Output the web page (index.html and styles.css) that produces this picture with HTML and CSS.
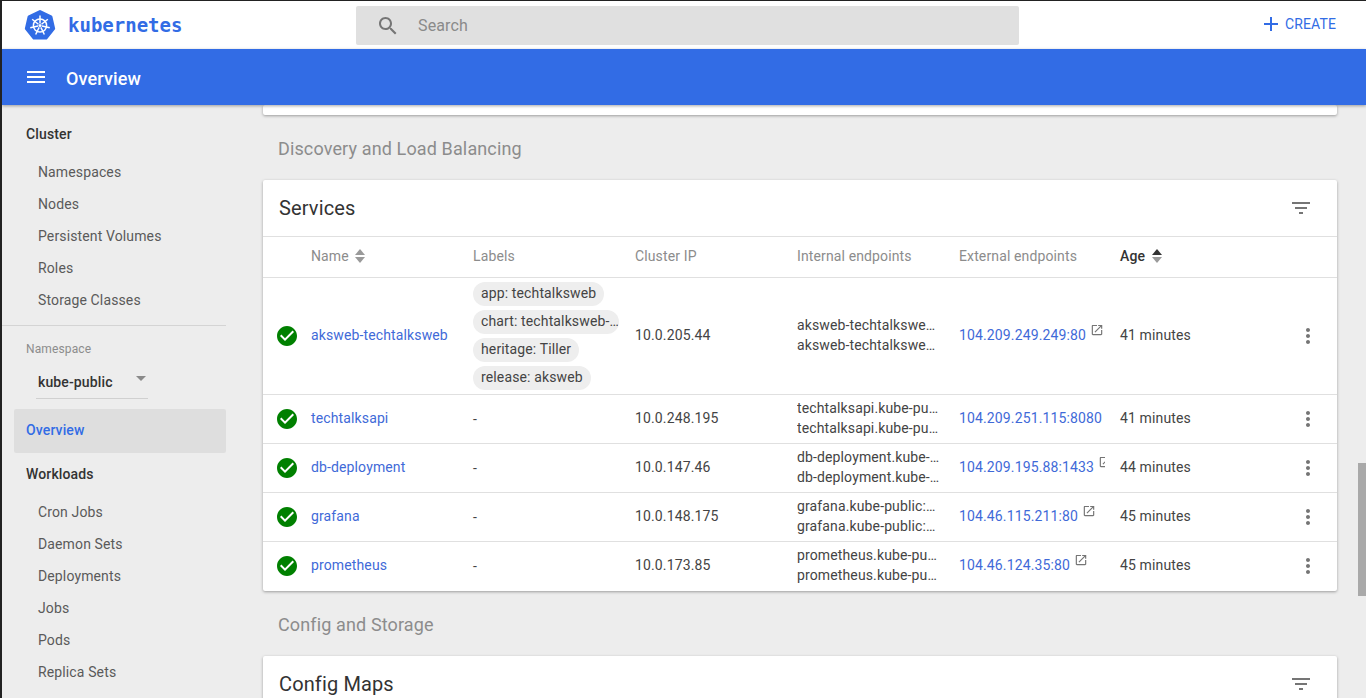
FILE: index.html
```html
<!DOCTYPE html>
<html lang="en">

<head>
    <meta charset="UTF-8">
    <meta name="viewport" content="width=device-width, initial-scale=1.0">
    <title>Overview - Kubernetes Dashboard</title>
    <link rel="stylesheet" href="styles.css">
</head>

<body>
    <svg class="sprite" aria-hidden="true">
        <symbol id="i-search" viewBox="0 0 24 24"><path d="M15.5 14h-.79l-.28-.27C15.41 12.59 16 11.11 16 9.5 16 5.91 13.09 3 9.5 3S3 5.91 3 9.5 5.91 16 9.5 16c1.61 0 3.09-.59 4.23-1.57l.27.28v.79l5 4.99L20.49 19l-4.99-5zm-6 0C7.01 14 5 11.99 5 9.5S7.01 5 9.5 5 14 7.01 14 9.5 11.99 14 9.5 14z"/></symbol>
        <symbol id="i-plus" viewBox="0 0 24 24"><path d="M19 13h-6v6h-2v-6H5v-2h6V5h2v6h6v2z"/></symbol>
        <symbol id="i-menu" viewBox="0 0 24 24"><path d="M3 18h18v-2H3v2zm0-5h18v-2H3v2zm0-7v2h18V6H3z"/></symbol>
        <symbol id="i-filter" viewBox="0 0 24 24"><path d="M10 18h4v-2h-4v2zM3 6v2h18V6H3zm3 7h12v-2H6v2z"/></symbol>
        <symbol id="i-ok" viewBox="0 0 24 24"><path d="M12 2C6.48 2 2 6.48 2 12s4.48 10 10 10 10-4.48 10-10S17.52 2 12 2zm-2 15l-5-5 1.41-1.41L10 14.17l7.59-7.59L19 8l-9 9z"/></symbol>
        <symbol id="i-more" viewBox="0 0 24 24"><path d="M12 8c1.1 0 2-.9 2-2s-.9-2-2-2-2 .9-2 2 .9 2 2 2zm0 2c-1.1 0-2 .9-2 2s.9 2 2 2 2-.9 2-2-.9-2-2-2zm0 6c-1.1 0-2 .9-2 2s.9 2 2 2 2-.9 2-2-.9-2-2-2z"/></symbol>
        <symbol id="i-open" viewBox="0 0 24 24"><path d="M19 19H5V5h7V3H5c-1.11 0-2 .9-2 2v14c0 1.1.89 2 2 2h14c1.1 0 2-.9 2-2v-7h-2v7zM14 3v2h3.59l-9.83 9.83 1.41 1.41L19 6.41V10h2V3h-7z"/></symbol>
    </svg>

    <header class="topbar">
        <div class="brand">
            <svg class="logo" viewBox="0 0 32 32">
                <polygon class="logo-hept" points="16,2.5 26.95,7.77 29.65,19.61 22.07,29.11 9.93,29.11 2.35,19.61 5.05,7.77"/>
                <g class="logo-wheel">
                    <circle cx="16" cy="16.5" r="6.6"/>
                    <circle class="logo-hub" cx="16" cy="16.5" r="1.5"/>
                    <path d="M16 14.5V6.5"/>
                    <path d="M16 14.5V6.5" transform="rotate(51.43 16 16.5)"/>
                    <path d="M16 14.5V6.5" transform="rotate(102.86 16 16.5)"/>
                    <path d="M16 14.5V6.5" transform="rotate(154.29 16 16.5)"/>
                    <path d="M16 14.5V6.5" transform="rotate(205.71 16 16.5)"/>
                    <path d="M16 14.5V6.5" transform="rotate(257.14 16 16.5)"/>
                    <path d="M16 14.5V6.5" transform="rotate(308.57 16 16.5)"/>
                </g>
            </svg>
            <span class="brand-name">kubernetes</span>
        </div>
        <div class="search">
            <svg class="search-icon"><use href="#i-search"/></svg>
            <span class="search-text">Search</span>
        </div>
        <a class="create" href="#">
            <svg class="create-icon"><use href="#i-plus"/></svg>
            <span>CREATE</span>
        </a>
    </header>

    <div class="titlebar">
        <svg class="menu-icon"><use href="#i-menu"/></svg>
        <span class="page-title">Overview</span>
    </div>

    <div class="layout">
        <nav class="sidebar">
            <div class="nav-heading first">Cluster</div>
            <a class="nav-item" href="#">Namespaces</a>
            <a class="nav-item" href="#">Nodes</a>
            <a class="nav-item" href="#">Persistent Volumes</a>
            <a class="nav-item" href="#">Roles</a>
            <a class="nav-item" href="#">Storage Classes</a>
            <div class="nav-divider"></div>
            <div class="ns-label">Namespace</div>
            <div class="ns-select">
                <span>kube-public</span>
                <span class="ns-arrow"></span>
            </div>
            <a class="nav-active" href="#">Overview</a>
            <div class="nav-heading">Workloads</div>
            <a class="nav-item" href="#">Cron Jobs</a>
            <a class="nav-item" href="#">Daemon Sets</a>
            <a class="nav-item" href="#">Deployments</a>
            <a class="nav-item" href="#">Jobs</a>
            <a class="nav-item" href="#">Pods</a>
            <a class="nav-item" href="#">Replica Sets</a>
        </nav>

        <main class="content">
            <div class="card card-stub"></div>
            <h2 class="section">Discovery and Load Balancing</h2>

            <div class="card">
                <div class="card-title">
                    <span>Services</span>
                    <svg class="filter-icon"><use href="#i-filter"/></svg>
                </div>
                <table class="services">
                    <colgroup>
                        <col class="col-status">
                        <col class="col-data">
                        <col class="col-data">
                        <col class="col-data">
                        <col class="col-data">
                        <col class="col-ext">
                        <col class="col-age">
                        <col class="col-menu">
                    </colgroup>
                    <thead>
                        <tr>
                            <th></th>
                            <th>Name <svg class="sort" viewBox="0 0 12 16"><path d="M6 1l5 6H1z"/><path d="M6 15l5-6H1z"/></svg></th>
                            <th>Labels</th>
                            <th>Cluster IP</th>
                            <th>Internal endpoints</th>
                            <th>External endpoints</th>
                            <th class="sorted">Age <svg class="sort" viewBox="0 0 12 16"><path class="sort-on" d="M6 1l5 6H1z"/><path d="M6 15l5-6H1z"/></svg></th>
                            <th></th>
                        </tr>
                    </thead>
                    <tbody>
                        <tr class="row-tall">
                            <td><svg class="ok"><use href="#i-ok"/></svg></td>
                            <td><a href="#">aksweb-techtalksweb</a></td>
                            <td class="labels">
                                <span class="chip">app: techtalksweb</span>
                                <span class="chip chip-cut">chart: techtalksweb-0.1.0</span>
                                <span class="chip">heritage: Tiller</span>
                                <span class="chip">release: aksweb</span>
                            </td>
                            <td>10.0.205.44</td>
                            <td>
                                <div class="endpoint">aksweb-techtalksweb.kube-public:80</div>
                                <div class="endpoint">aksweb-techtalksweb.kube-public:0</div>
                            </td>
                            <td><div class="external"><a href="#">104.209.249.249:80</a><svg class="open"><use href="#i-open"/></svg></div></td>
                            <td>41 minutes</td>
                            <td><svg class="more"><use href="#i-more"/></svg></td>
                        </tr>
                        <tr>
                            <td><svg class="ok"><use href="#i-ok"/></svg></td>
                            <td><a href="#">techtalksapi</a></td>
                            <td class="labels">-</td>
                            <td>10.0.248.195</td>
                            <td>
                                <div class="endpoint">techtalksapi.kube-public:8080</div>
                                <div class="endpoint">techtalksapi.kube-public:0</div>
                            </td>
                            <td><div class="external"><a href="#">104.209.251.115:8080</a><svg class="open"><use href="#i-open"/></svg></div></td>
                            <td>41 minutes</td>
                            <td><svg class="more"><use href="#i-more"/></svg></td>
                        </tr>
                        <tr>
                            <td><svg class="ok"><use href="#i-ok"/></svg></td>
                            <td><a href="#">db-deployment</a></td>
                            <td class="labels">-</td>
                            <td>10.0.147.46</td>
                            <td>
                                <div class="endpoint">db-deployment.kube-public:1433</div>
                                <div class="endpoint">db-deployment.kube-public:0</div>
                            </td>
                            <td><div class="external"><a href="#">104.209.195.88:1433</a><svg class="open"><use href="#i-open"/></svg></div></td>
                            <td>44 minutes</td>
                            <td><svg class="more"><use href="#i-more"/></svg></td>
                        </tr>
                        <tr>
                            <td><svg class="ok"><use href="#i-ok"/></svg></td>
                            <td><a href="#">grafana</a></td>
                            <td class="labels">-</td>
                            <td>10.0.148.175</td>
                            <td>
                                <div class="endpoint">grafana.kube-public:80 TCP</div>
                                <div class="endpoint">grafana.kube-public:0 TCP</div>
                            </td>
                            <td><div class="external"><a href="#">104.46.115.211:80</a><svg class="open"><use href="#i-open"/></svg></div></td>
                            <td>45 minutes</td>
                            <td><svg class="more"><use href="#i-more"/></svg></td>
                        </tr>
                        <tr>
                            <td><svg class="ok"><use href="#i-ok"/></svg></td>
                            <td><a href="#">prometheus</a></td>
                            <td class="labels">-</td>
                            <td>10.0.173.85</td>
                            <td>
                                <div class="endpoint">prometheus.kube-public:80</div>
                                <div class="endpoint">prometheus.kube-public:0</div>
                            </td>
                            <td><div class="external"><a href="#">104.46.124.35:80</a><svg class="open"><use href="#i-open"/></svg></div></td>
                            <td>45 minutes</td>
                            <td><svg class="more"><use href="#i-more"/></svg></td>
                        </tr>
                    </tbody>
                </table>
            </div>

            <h2 class="section">Config and Storage</h2>

            <div class="card">
                <div class="card-title">
                    <span>Config Maps</span>
                    <svg class="filter-icon"><use href="#i-filter"/></svg>
                </div>
            </div>

            <div class="scroll-thumb"></div>
        </main>
    </div>
</body>

</html>
```

FILE: styles.css
```css
* {
    box-sizing: border-box;
}

html {
    height: 100%;
    overflow: hidden;
}

body {
    margin: 0;
    height: 100%;
    display: flex;
    flex-direction: column;
    overflow: hidden;
    border-top: 1px solid #222;
    border-left: 2px solid #222;
    background-color: #ededed;
    font-family: Roboto, "Liberation Sans", sans-serif;
    font-size: 14px;
    letter-spacing: .13px;
    color: rgba(0, 0, 0, .87);
}

a {
    text-decoration: none;
}

.sprite {
    display: none;
}

/* top white bar */
.topbar {
    flex: none;
    height: 48px;
    display: flex;
    align-items: flex-start;
    background: white;
}

.brand {
    width: 354px;
    height: 48px;
    padding-left: 22px;
    display: flex;
    align-items: center;
}

.logo {
    width: 32px;
    height: 32px;
}

.logo-hept {
    fill: #326ce5;
    stroke: #326ce5;
    stroke-width: 3;
    stroke-linejoin: round;
}

.logo-wheel {
    fill: none;
    stroke: white;
    stroke-width: 1.5;
}

.logo-hub {
    fill: white;
    stroke: none;
}

.brand-name {
    margin-left: 12px;
    font-family: "DejaVu Sans Mono", monospace;
    font-size: 19px;
    font-weight: bold;
    letter-spacing: 0;
    color: #326ce5;
}

.search {
    width: 663px;
    height: 39px;
    margin-top: 5px;
    display: flex;
    align-items: center;
    background: #e0e0e0;
    border-radius: 2px;
}

.search-icon {
    width: 24px;
    height: 24px;
    margin-left: 20px;
    fill: #757575;
}

.search-text {
    margin-left: 18px;
    font-size: 16px;
    color: #8a8a8a;
}

.create {
    height: 46px;
    margin-left: 240px;
    display: flex;
    align-items: center;
    color: #326ce5;
    font-size: 14px;
}

.create-icon {
    width: 24px;
    height: 24px;
    margin-right: 2px;
    fill: #326ce5;
}

/* blue title bar */
.titlebar {
    flex: none;
    position: relative;
    z-index: 2;
    height: 56px;
    padding-left: 22px;
    display: flex;
    align-items: center;
    background: #326ce5;
    box-shadow: 0 1px 3px rgba(0, 0, 0, .35);
    color: white;
}

.menu-icon {
    width: 24px;
    height: 24px;
    fill: white;
}

.page-title {
    margin: 2px 0 0 18px;
    font-size: 18px;
    font-weight: 500;
}

.layout {
    flex: 1;
    min-height: 0;
    display: flex;
}

/* left navigation */
.sidebar {
    flex: none;
    width: 256px;
    padding-right: 32px;
    overflow: hidden;
}

.nav-heading {
    height: 32px;
    margin: 0 0 6px;
    padding-left: 24px;
    line-height: 32px;
    font-weight: 500;
    color: #333;
}

.nav-heading.first {
    margin-top: 13px;
}

.nav-item {
    display: block;
    height: 32px;
    padding-left: 36px;
    line-height: 32px;
    color: #5a5a5a;
}

.nav-divider {
    height: 1px;
    margin-top: 9px;
    background: #d4d4d4;
}

.ns-label {
    margin-top: 15px;
    padding-left: 24px;
    font-size: 12px;
    line-height: 16px;
    color: #8c8c8c;
}

.ns-select {
    width: 112px;
    height: 33px;
    margin: 9px 0 0 34px;
    padding: 0 0 1px 2px;
    display: flex;
    justify-content: space-between;
    align-items: center;
    border-bottom: 1px solid #d0d0d0;
    font-weight: 500;
    color: #333;
}

.ns-arrow {
    margin: 0 2px 6px 0;
    border-left: 5px solid transparent;
    border-right: 5px solid transparent;
    border-top: 5px solid #8a8a8a;
}

.nav-active {
    display: block;
    height: 44px;
    margin: 10px 0 5px 12px;
    padding-left: 12px;
    line-height: 42px;
    background: #dedede;
    border-radius: 2px;
    font-weight: 500;
    color: #326ce5;
}

/* main column */
.content {
    flex: 1;
    position: relative;
    min-width: 0;
    padding: 0 29px 0 5px;
    overflow: hidden;
}

.card {
    background: white;
    border-radius: 2px;
    box-shadow: 0 1px 3px rgba(0, 0, 0, .35);
}

.card-stub {
    height: 10px;
}

.section {
    height: 65px;
    margin: 0;
    padding: 2px 0 0 15px;
    display: flex;
    align-items: center;
    font-size: 18px;
    font-weight: 400;
    color: #8c8c8c;
}

.card-title {
    height: 57px;
    padding: 0 24px 0 16px;
    display: flex;
    justify-content: space-between;
    align-items: center;
    border-bottom: 1px solid #e0e0e0;
    font-size: 20px;
    color: #333;
}

.filter-icon {
    width: 24px;
    height: 24px;
    fill: #757575;
}

/* services table */
.services {
    width: 100%;
    table-layout: fixed;
    border-collapse: separate;
    border-spacing: 0;
}

.col-status {
    width: 40px;
}

.col-data {
    width: 162px;
}

.col-ext {
    width: 161px;
}

.col-age {
    width: 176px;
}

.col-menu {
    width: 49px;
}

.services th {
    height: 41px;
    padding: 0 8px 2px;
    border-bottom: 1px solid #e0e0e0;
    text-align: left;
    font-weight: 400;
    white-space: nowrap;
    color: #8c8c8c;
}

.services th.sorted {
    font-weight: 500;
    color: #333;
}

.services td {
    height: 49px;
    padding: 0 8px 2px;
    border-bottom: 1px solid #e0e0e0;
    vertical-align: middle;
    white-space: nowrap;
    color: #444;
}

.services tbody tr:last-child td {
    border-bottom-color: transparent;
}

.services td a {
    color: #3f6ad8;
}

.services .row-tall td {
    height: 117px;
}

.services td.labels {
    padding-bottom: 0;
}

.sort {
    width: 12px;
    height: 16px;
    margin-left: 2px;
    vertical-align: -3px;
    fill: #9a9a9a;
}

.sort-on {
    fill: #333;
}

.ok {
    display: block;
    width: 24px;
    height: 24px;
    margin: 0 0 -2px 4px;
    fill: #008000;
    background: radial-gradient(circle, white 55%, transparent 56%);
}

.chip {
    display: block;
    width: fit-content;
    max-width: 146px;
    height: 24px;
    margin: 2px 0 4px;
    padding: 0 8px;
    line-height: 23px;
    background: #eee;
    border-radius: 12px;
    overflow: hidden;
    text-overflow: ellipsis;
}

.chip:last-child {
    margin-bottom: 2px;
}

.chip-cut {
    padding-right: 0;
}

.endpoint {
    max-width: 143px;
    line-height: 20px;
    overflow: hidden;
    text-overflow: ellipsis;
}

.external {
    margin-right: -1px;
    line-height: 20px;
    overflow: hidden;
}

.open {
    width: 14px;
    height: 14px;
    margin: -4px 0 0 4px;
    vertical-align: 3px;
    fill: #757575;
}

.more {
    display: block;
    width: 24px;
    height: 24px;
    margin-bottom: -2px;
    fill: #757575;
}

.scroll-thumb {
    position: absolute;
    top: 358px;
    right: 0;
    width: 8px;
    height: 133px;
    background: #a9a9a9;
}
```
